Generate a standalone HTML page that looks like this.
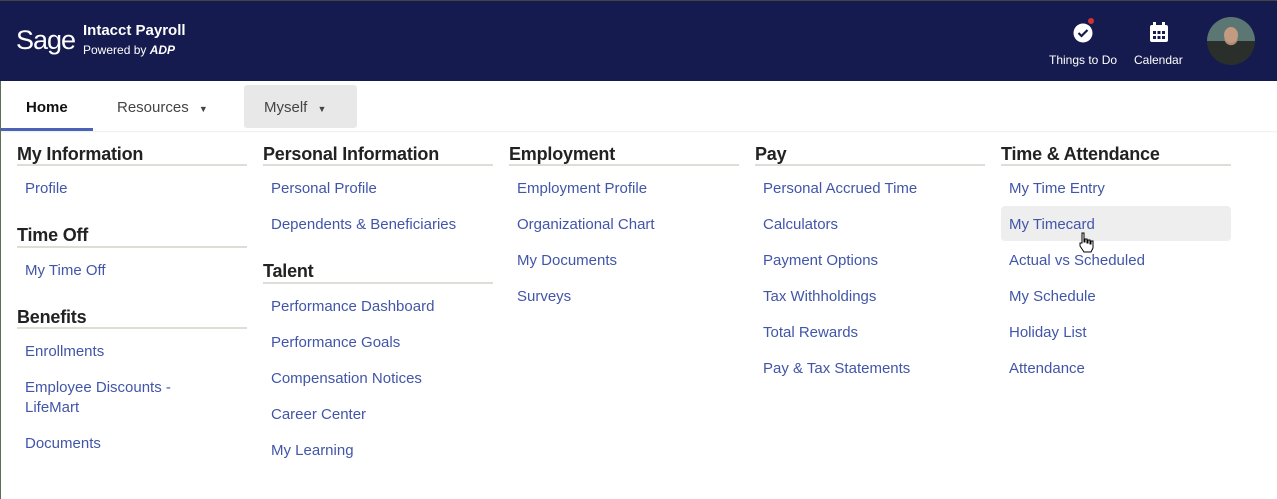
<!DOCTYPE html>
<html><head><meta charset="utf-8"><style>
*{margin:0;padding:0;box-sizing:border-box}
body{width:1277px;height:499px;overflow:hidden;background:#fff;font-family:"Liberation Sans",sans-serif;position:relative}
.hdr{position:absolute;left:0;top:0;width:1277px;height:81px;background:#161b4f;border-top:1px solid #444}
.a{position:absolute;white-space:nowrap}
.h{font-size:18px;font-weight:bold;color:#222;line-height:20px;letter-spacing:-0.2px;margin-top:1px}
.u{position:absolute;height:2px;width:230px;background:#e0ddd9}
.l{font-size:15px;color:#4156a8;line-height:20px;margin-top:1px}
.nav{font-size:15px;color:#444;line-height:20px;margin-top:1px}
</style></head><body>
<div class="hdr"></div>
<div class="a" style="left:16px;top:22px;font-size:27px;color:#fff;line-height:36px;letter-spacing:-1px">Sage</div>
<div class="a" style="left:83px;top:22px;font-size:15px;font-weight:bold;color:#fff;line-height:18px">Intacct Payroll</div>
<div class="a" style="left:83px;top:42px;font-size:12px;color:#fff;line-height:16px">Powered by <i style="font-weight:bold">ADP</i></div>
<svg class="a" style="left:1072px;top:15px" width="26" height="30" viewBox="0 0 26 30"><circle cx="11" cy="18" r="9.5" fill="#fff"/><path d="M6.5 18l3 3 6-6" stroke="#161b4f" stroke-width="2.2" fill="none"/><circle cx="19" cy="6" r="3.5" fill="#d2332f" stroke="#161b4f" stroke-width="1"/></svg>
<div class="a" style="left:1049px;top:52px;font-size:12px;color:#fff;line-height:16px">Things to Do</div>
<svg class="a" style="left:1149px;top:22px" width="20" height="21" viewBox="0 0 20 21"><rect x="1" y="3" width="18" height="17" rx="2" fill="#fff"/><rect x="4" y="0" width="3" height="5" fill="#fff"/><rect x="13" y="0" width="3" height="5" fill="#fff"/><g fill="#161b4f"><rect x="4" y="9" width="3" height="3"/><rect x="8.5" y="9" width="3" height="3"/><rect x="13" y="9" width="3" height="3"/><rect x="4" y="14" width="3" height="3"/><rect x="8.5" y="14" width="3" height="3"/><rect x="13" y="14" width="3" height="3"/></g></svg>
<div class="a" style="left:1134px;top:52px;font-size:12px;color:#fff;line-height:16px">Calendar</div>
<div class="a" style="left:1207px;top:17px;width:48px;height:48px;border-radius:50%;background:radial-gradient(circle at 50% 45%,#b08a70 0 18%,#2a2f2c 19% 100%),#6e9a94;overflow:hidden"><div style="position:absolute;left:0;top:0;width:48px;height:24px;background:#7ea9a3;opacity:.6"></div><div style="position:absolute;left:17px;top:10px;width:14px;height:16px;border-radius:50%;background:#c49a80"></div></div>
<div class="a" style="left:0;top:81px;width:1px;height:418px;background:#5a6e5a"></div>
<div class="a nav" style="left:26px;top:97px;color:#111;font-weight:bold">Home</div>
<div class="a" style="left:1px;top:128px;width:92px;height:4px;background:#4a63b8"></div>
<div class="a nav" style="left:117px;top:97px">Resources <span style="font-size:9px;margin-left:6px">▼</span></div>
<div class="a" style="left:244px;top:85px;width:113px;height:43px;background:#e8e8e8;border-radius:3px"></div>
<div class="a nav" style="left:264px;top:97px">Myself <span style="font-size:9px;margin-left:6px">▼</span></div>
<div class="a" style="left:1px;top:131px;width:1276px;height:2px;background:linear-gradient(#eee,#fff)"></div>
<div class="a" style="left:1001px;top:206px;width:230px;height:35px;background:#eeeeee;border-radius:4px"></div>

<div class="a h" style="left:17px;top:143px">My Information</div><div class="u" style="left:17px;top:164px"></div>
<div class="a l" style="left:25px;top:178px">Profile</div>
<div class="a h" style="left:17px;top:224px">Time Off</div><div class="u" style="left:17px;top:246px"></div>
<div class="a l" style="left:25px;top:260px">My Time Off</div>
<div class="a h" style="left:17px;top:306px">Benefits</div><div class="u" style="left:17px;top:327px"></div>
<div class="a l" style="left:25px;top:341px">Enrollments</div>
<div class="a l" style="left:25px;top:377px">Employee Discounts -<br>LifeMart</div>
<div class="a l" style="left:25px;top:433px">Documents</div>

<div class="a h" style="left:263px;top:143px">Personal Information</div><div class="u" style="left:263px;top:164px"></div>
<div class="a l" style="left:271px;top:178px">Personal Profile</div>
<div class="a l" style="left:271px;top:214px">Dependents &amp; Beneficiaries</div>
<div class="a h" style="left:263px;top:260px">Talent</div><div class="u" style="left:263px;top:282px"></div>
<div class="a l" style="left:271px;top:296px">Performance Dashboard</div>
<div class="a l" style="left:271px;top:332px">Performance Goals</div>
<div class="a l" style="left:271px;top:368px">Compensation Notices</div>
<div class="a l" style="left:271px;top:404px">Career Center</div>
<div class="a l" style="left:271px;top:440px">My Learning</div>

<div class="a h" style="left:509px;top:143px">Employment</div><div class="u" style="left:509px;top:164px"></div>
<div class="a l" style="left:517px;top:178px">Employment Profile</div>
<div class="a l" style="left:517px;top:214px">Organizational Chart</div>
<div class="a l" style="left:517px;top:250px">My Documents</div>
<div class="a l" style="left:517px;top:286px">Surveys</div>

<div class="a h" style="left:755px;top:143px">Pay</div><div class="u" style="left:755px;top:164px"></div>
<div class="a l" style="left:763px;top:178px">Personal Accrued Time</div>
<div class="a l" style="left:763px;top:214px">Calculators</div>
<div class="a l" style="left:763px;top:250px">Payment Options</div>
<div class="a l" style="left:763px;top:286px">Tax Withholdings</div>
<div class="a l" style="left:763px;top:322px">Total Rewards</div>
<div class="a l" style="left:763px;top:358px">Pay &amp; Tax Statements</div>

<div class="a h" style="left:1001px;top:143px">Time &amp; Attendance</div><div class="u" style="left:1001px;top:164px"></div>
<div class="a l" style="left:1009px;top:178px">My Time Entry</div>
<div class="a l" style="left:1009px;top:214px">My Timecard</div>
<div class="a l" style="left:1009px;top:250px">Actual vs Scheduled</div>
<div class="a l" style="left:1009px;top:286px">My Schedule</div>
<div class="a l" style="left:1009px;top:322px">Holiday List</div>
<div class="a l" style="left:1009px;top:358px">Attendance</div>
<svg class="a" style="left:1077px;top:232px" width="18" height="22" viewBox="0 0 18 22"><path d="M5 1h2v9h1V7h2v4h1V8h2v4h1V9h2v7l-2 4H7l-4-6V11h2z" fill="#fff" stroke="#000" stroke-width="1"/></svg>
</body></html>
